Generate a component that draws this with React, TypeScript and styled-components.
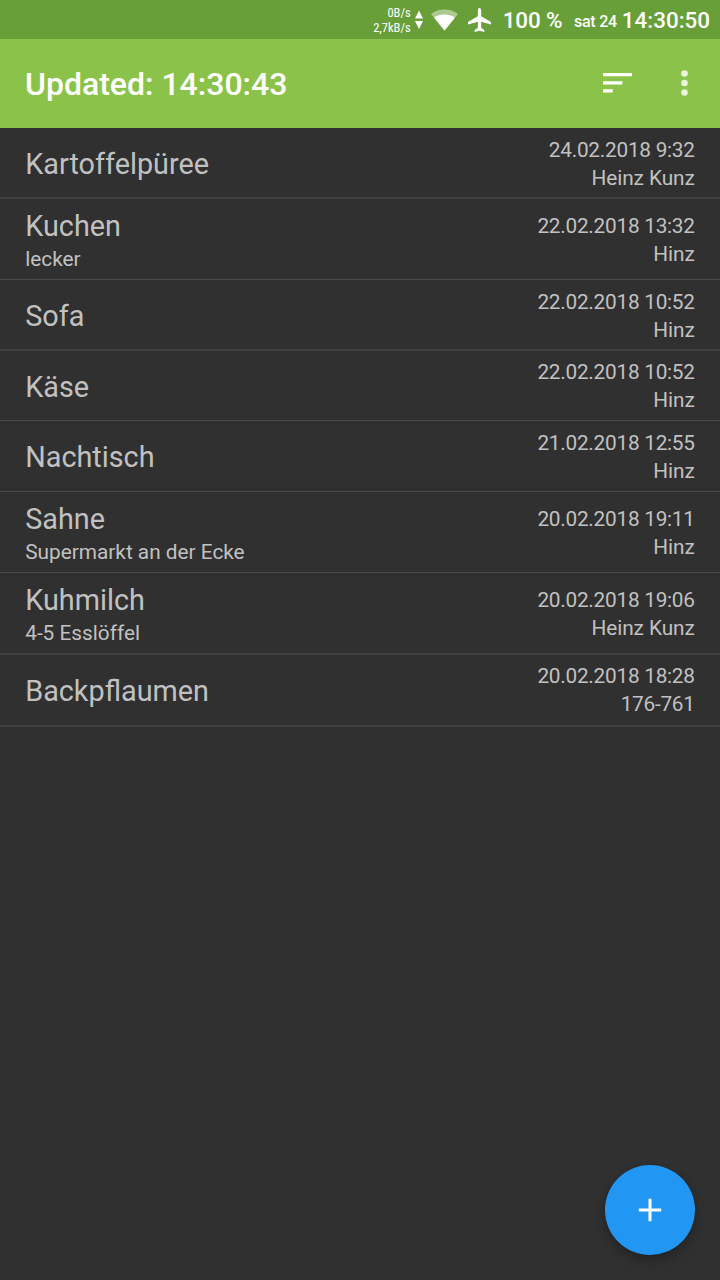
import React from "react";
import styled, { createGlobalStyle } from "styled-components";

const GlobalStyle = createGlobalStyle`
  body { margin: 0; background: #303030; font-family: Roboto, sans-serif; }
  *, *::before, *::after { box-sizing: border-box; }
`;

const Screen = styled.div`
  position: relative;
  display: flex;
  flex-direction: column;
  width: 720px;
  height: 1280px;
  overflow: hidden;
  background: #303030;
`;

const StatusBar = styled.header`
  display: flex;
  justify-content: flex-end;
  align-items: center;
  height: 39px;
  flex: none;
  padding: 0 10px 0 0;
  background: #689f38;
  color: #fff;
  white-space: nowrap;
`;

const NetSpeed = styled.div`
  display: flex;
  flex-direction: column;
  align-items: flex-end;
  width: 40px;
  margin-right: 4px;
  font: 400 12.5px/15px "Roboto Condensed", Roboto, sans-serif;
`;

const StatusIcon = styled.svg<{ $gap: number }>`
  display: block;
  flex: none;
  margin-right: ${(p) => p.$gap}px;
`;

const StatusText = styled.span<{ $size: number; $gap?: number; $drop?: number; $tracking?: number }>`
  font-weight: 500;
  font-size: ${(p) => p.$size}px;
  line-height: 28px;
  letter-spacing: ${(p) => p.$tracking ?? 0}px;
  margin-right: ${(p) => p.$gap ?? 0}px;
  padding-top: ${(p) => p.$drop ?? 0}px;
`;

const Toolbar = styled.div`
  display: flex;
  align-items: center;
  height: 89px;
  flex: none;
  padding: 0 32px 0 25px;
  background: #8bc34a;
  color: #fff;
`;

const Title = styled.h1`
  flex: 1;
  margin: 0;
  font-size: 32px;
  font-weight: 500;
  line-height: 38px;
`;

const ToolButton = styled.button`
  display: flex;
  border: 0;
  padding: 0 0 1px;
  background: none;
  color: #fff;
  margin-left: 47px;
`;

const List = styled.ul`
  margin: 0;
  padding: 0;
  list-style: none;
`;

const Row = styled.li<{ $height: number; $soft: boolean }>`
  display: flex;
  justify-content: space-between;
  align-items: center;
  height: ${(p) => p.$height}px;
  padding: 2px 25.3px 0 25.2px;
  border-bottom: ${(p) => (p.$soft ? "2px solid #404040" : "1px solid #4c4c4c")};
  color: #c1c1c1;
  white-space: nowrap;
`;

const Item = styled.div<{ $double: boolean }>`
  display: flex;
  flex-direction: column;
  padding-top: ${(p) => (p.$double ? 3 : 0)}px;
`;

const Name = styled.span`
  font-size: 28.8px;
  line-height: 34px;
`;

const Note = styled.span`
  font-size: 20.8px;
  line-height: 32px;
`;

const Meta = styled.div<{ $raised?: boolean }>`
  display: flex;
  flex-direction: column;
  align-items: flex-end;
  padding-bottom: ${(p) => (p.$raised ? 2 : 0)}px;
  font-size: 20.8px;
  line-height: 28px;
`;

const Stamp = styled.span`
  letter-spacing: -0.26px;
`;

const Author = styled.span<{ $numeric: boolean }>`
  letter-spacing: ${(p) => (p.$numeric ? -0.26 : -0.08)}px;
`;

const AddButton = styled.button`
  position: absolute;
  right: 25px;
  bottom: 25px;
  display: flex;
  align-items: center;
  justify-content: center;
  width: 90px;
  height: 90px;
  padding: 0;
  border: 0;
  border-radius: 50%;
  background: #2196f3;
  box-shadow: 0 7px 12px rgba(0, 0, 0, 0.22), 0 0 4px rgba(0, 0, 0, 0.1);
`;

type Entry = {
  name: string;
  note?: string;
  date: string;
  by: string;
  height: number;
  soft: boolean;
  raised?: boolean;
};

const entries: Entry[] = [
  { name: "Kartoffelpüree", date: "24.02.2018 9:32", by: "Heinz Kunz", height: 71, soft: true },
  { name: "Kuchen", note: "lecker", date: "22.02.2018 13:32", by: "Hinz", height: 81, soft: false },
  { name: "Sofa", date: "22.02.2018 10:52", by: "Hinz", height: 71, soft: true },
  { name: "Käse", date: "22.02.2018 10:52", by: "Hinz", height: 70, soft: false, raised: true },
  { name: "Nachtisch", date: "21.02.2018 12:55", by: "Hinz", height: 71, soft: false },
  { name: "Sahne", note: "Supermarkt an der Ecke", date: "20.02.2018 19:11", by: "Hinz", height: 81, soft: false },
  { name: "Kuhmilch", note: "4-5 Esslöffel", date: "20.02.2018 19:06", by: "Heinz Kunz", height: 82, soft: true },
  { name: "Backpflaumen", date: "20.02.2018 18:28", by: "176-761", height: 72, soft: true, raised: true },
];

export default function App() {
  return (
    <>
      <GlobalStyle />
      <Screen>
        <StatusBar>
          <NetSpeed>
            <span>0B/s</span>
            <span>2,7kB/s</span>
          </NetSpeed>
          <StatusIcon $gap={8} width="8" height="20" viewBox="0 0 8 20" fill="#fff">
            <path d="M4 0.5 8 8.5H0ZM0 11h8L4 19Z" />
          </StatusIcon>
          <StatusIcon $gap={10} width="27" height="22" viewBox="0 0 27 23" preserveAspectRatio="none" fill="#fff">
            <path opacity=".45" d="M13.5 22.5 0 5.2Q6 .5 13.5 .5T27 5.2Z" />
            <path d="M13.5 22.5 3.1 9.2Q7.5 5.8 13.5 5.8T23.9 9.2Z" />
          </StatusIcon>
          <StatusIcon $gap={12} width="23" height="24" viewBox="3 2 18 20" preserveAspectRatio="none" fill="#fff">
            <path d="M21 15.8v-1.600q0-.6-.6-1L13.300 8.800V4c0-1.200-.6-2-1.300-2s-1.300.8-1.300 2v4.800L3.600 13.200q-.6.4-.6 1v1.600l7.700-2.300V18.500L8.200 20.300V22l3.800-1 3.800 1v-1.700L13.300 18.500v-5z" />
          </StatusIcon>
          <StatusText $size={22.4} $gap={11.5} $tracking={-0.1}>100 %</StatusText>
          <StatusText $size={16} $gap={5} $drop={5} $tracking={-0.25}>sat 24</StatusText>
          <StatusText $size={22.4}>14:30:50</StatusText>
        </StatusBar>
        <Toolbar>
          <Title>Updated: 14:30:43</Title>
          <ToolButton aria-label="Sort">
            <svg width="30" height="20" viewBox="0 0 30 20" fill="currentColor">
              <path d="M0 0h29v3.200H0ZM0 8.200h19.400v3.200H0ZM0 16.300h9.800v3.200H0Z" />
            </svg>
          </ToolButton>
          <ToolButton aria-label="More">
            <svg width="8" height="26" viewBox="0 0 8 26" fill="currentColor" opacity=".82">
              <circle cx="4.500" cy="3.500" r="3.300" />
              <circle cx="4.500" cy="13" r="3.300" />
              <circle cx="4.500" cy="22.500" r="3.300" />
            </svg>
          </ToolButton>
        </Toolbar>
        <List>
          {entries.map((e) => (
            <Row key={e.name} $height={e.height} $soft={e.soft}>
              <Item $double={!!e.note}>
                <Name>{e.name}</Name>
                {e.note && <Note>{e.note}</Note>}
              </Item>
              <Meta $raised={e.raised}>
                <Stamp>{e.date}</Stamp>
                <Author $numeric={/^\d/.test(e.by)}>{e.by}</Author>
              </Meta>
            </Row>
          ))}
        </List>
        <AddButton aria-label="Add">
          <svg width="24" height="24" viewBox="0 0 24 24" fill="#fff">
            <path d="M10.500 .8h3v9.700h9.700v3h-9.700v9.700h-3v-9.700H.8v-3h9.700Z" />
          </svg>
        </AddButton>
      </Screen>
    </>
  );
}
